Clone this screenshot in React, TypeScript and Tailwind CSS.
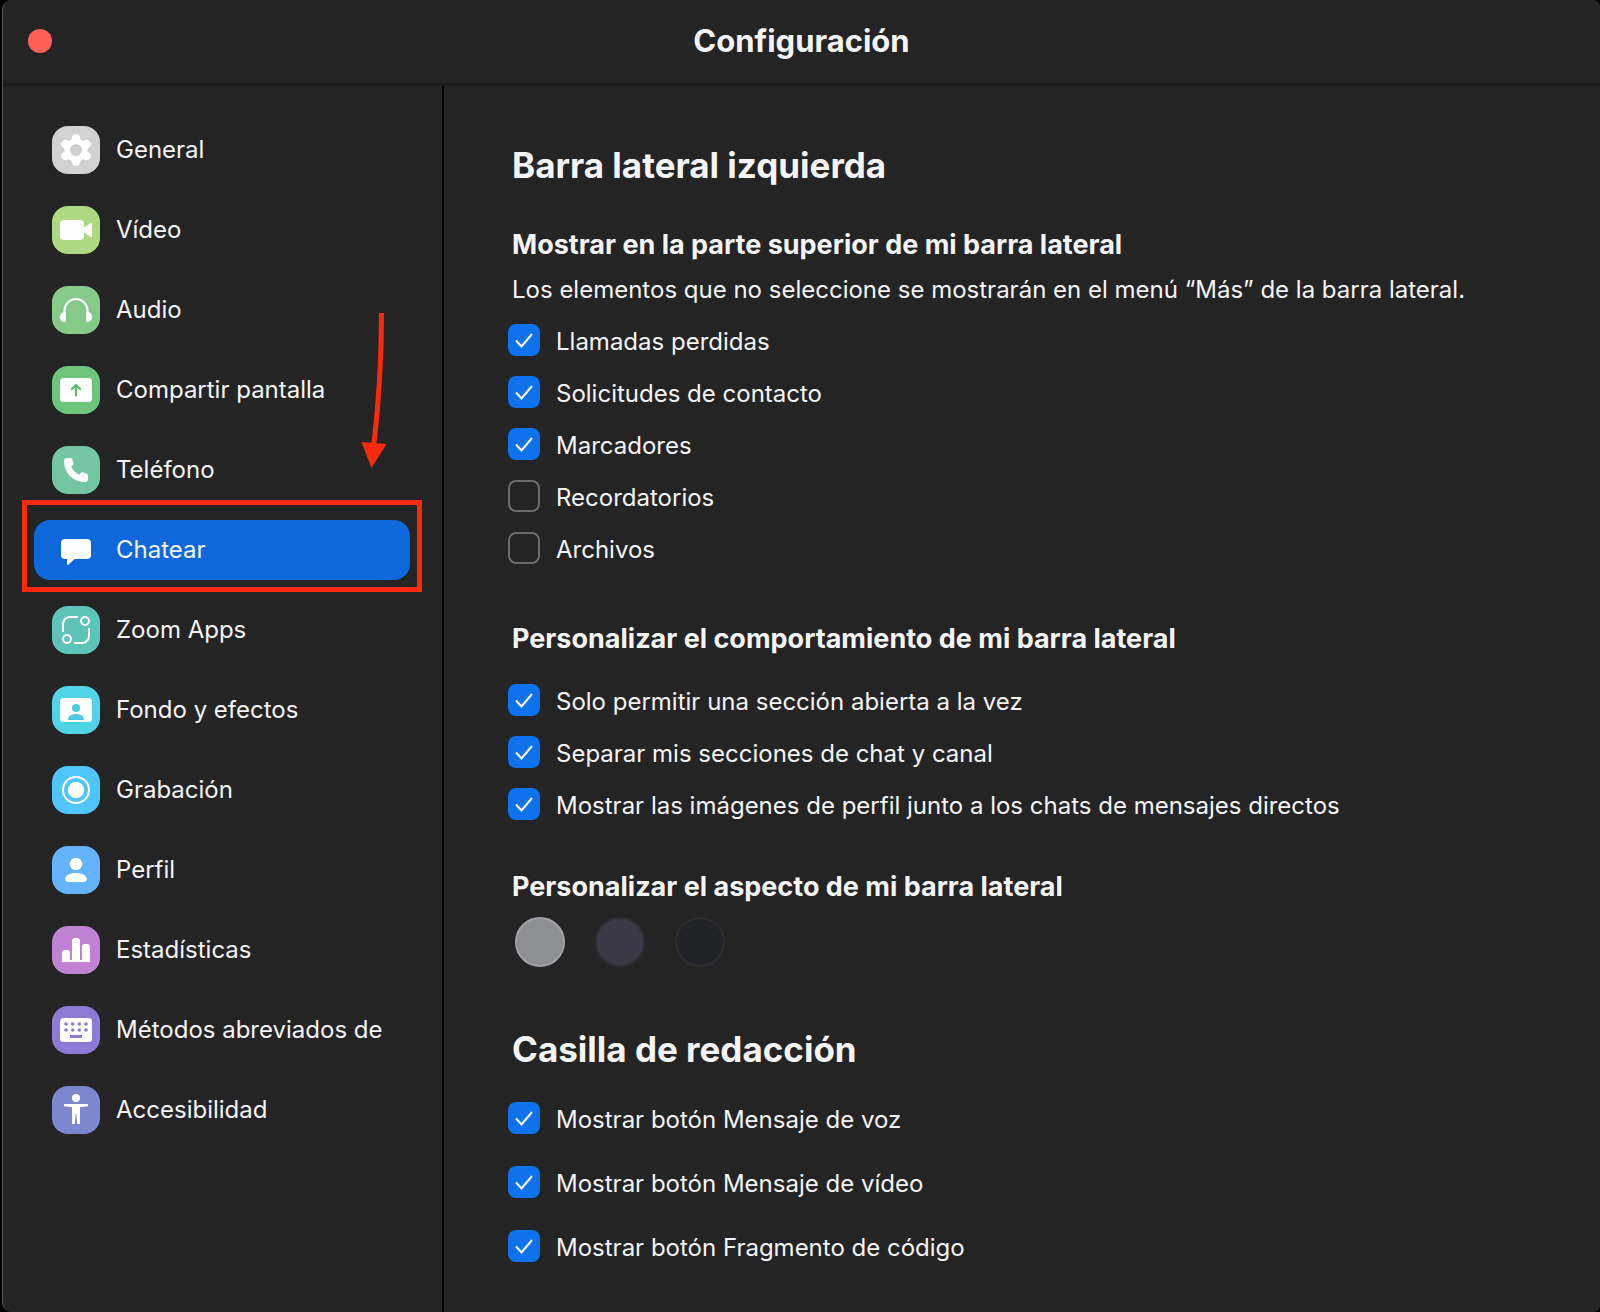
import { useState, type ReactNode } from "react";

const Svg = ({ children }: { children: ReactNode }) => (
  <svg viewBox="0 0 48 48" className="size-12" fill="#fff" aria-hidden="true">
    {children}
  </svg>
);

const nav = [
  {
    label: "General",
    tile: "bg-[#d2d2d2]",
    icon: (
      <Svg>
        <g stroke="#fff" strokeWidth="8.400" strokeLinecap="round">
          <path d="M24 12.200v23.600M13.300 18l21.400 12M34.700 18L13.300 30" />
        </g>
        <circle cx="24" cy="24" r="11.500" />
        <circle cx="24" cy="24" r="6" fill="#cfcfcf" />
      </Svg>
    ),
  },
  {
    label: "Vídeo",
    tile: "bg-[#aed982]",
    icon: (
      <Svg>
        <rect x="8" y="14" width="24" height="20" rx="4" />
        <path d="M31.500 22l7.300-4.900c.6-.4 1.200-.1 1.200.6v12.600c0 .7-.6 1-1.200.6L31.500 26z" />
      </Svg>
    ),
  },
  {
    label: "Audio",
    tile: "bg-[#86ca8a]",
    icon: (
      <Svg>
        <path d="M12.500 28v-3.500a11.500 11.500 0 0 1 23 0V28" fill="none" stroke="#fff" strokeWidth="2" />
        <path d="M11.500 26H14v8.500a1.500 1.500 0 0 1-1.500 1.500C9.500 36 8 33.500 8 31s1.200-4.400 3.500-5zM36.500 26H34v8.500a1.500 1.500 0 0 0 1.500 1.500c3 0 4.500-2.500 4.500-5s-1.200-4.400-3.500-5z" />
      </Svg>
    ),
  },
  {
    label: "Compartir pantalla",
    tile: "bg-[#6cc57a]",
    icon: (
      <Svg>
        <rect x="8" y="12" width="32" height="24" rx="3.500" />
        <path d="M24 29.500V19.500M19.800 23.200l4.200-4.200 4.200 4.200" fill="none" stroke="#5cbd6c" strokeWidth="2.300" strokeLinecap="round" strokeLinejoin="round" />
      </Svg>
    ),
  },
  {
    label: "Teléfono",
    tile: "bg-[#74c5a2]",
    icon: (
      <Svg>
        <path d="M15 12h3.200c1.100 0 2 .7 2.300 1.700l1 3.500c.3 1-.1 2-1 2.600l-1.300.9c1.500 3.400 4.500 6.500 8 8l.9-1.300c.6-.9 1.700-1.300 2.700-1l3.500 1c1 .3 1.700 1.200 1.700 2.300V33c0 1.700-1.300 3-3 3C21 36 12 27 12 15c0-1.700 1.300-3 3-3z" />
      </Svg>
    ),
  },
  {
    label: "Chatear",
    tile: "",
    icon: (
      <Svg>
        <path d="M13 13h22a4 4 0 0 1 4 4v12a4 4 0 0 1-4 4H22.500l-6 5.800c-.7.600-1.500.200-1.500-.8v-5h-2a4 4 0 0 1-4-4V17a4 4 0 0 1 4-4z" />
      </Svg>
    ),
  },
  {
    label: "Zoom Apps",
    tile: "bg-[#5ec4b9]",
    icon: (
      <Svg>
        <g fill="none" stroke="#fff" strokeWidth="2">
          <path d="M26 11h-8a7 7 0 0 0-7 7v8M22 37h8a7 7 0 0 0 7-7v-8" />
          <circle cx="33" cy="15" r="4" />
          <circle cx="15" cy="33" r="4" />
        </g>
      </Svg>
    ),
  },
  {
    label: "Fondo y efectos",
    tile: "bg-[#4fd3e5]",
    icon: (
      <Svg>
        <rect x="8" y="12" width="32" height="24" rx="3.500" />
        <circle cx="24" cy="22" r="4" fill="#4acbdf" />
        <path d="M16 34c0-4 3.600-6 8-6s8 2 8 6z" fill="#4acbdf" />
      </Svg>
    ),
  },
  {
    label: "Grabación",
    tile: "bg-[#4fc5fb]",
    icon: (
      <Svg>
        <circle cx="24" cy="24" r="13" fill="none" stroke="#fff" strokeWidth="2" />
        <circle cx="24" cy="24" r="8.200" />
      </Svg>
    ),
  },
  {
    label: "Perfil",
    tile: "bg-[#65b4fb]",
    icon: (
      <Svg>
        <circle cx="24" cy="18" r="6.200" />
        <path d="M24 27c6 0 10.800 2.600 10.800 6 0 2-1.300 3-3.300 3h-15c-2 0-3.300-1-3.300-3 0-3.400 4.800-6 10.800-6z" />
      </Svg>
    ),
  },
  {
    label: "Estadísticas",
    tile: "bg-[#c282d3]",
    icon: (
      <Svg>
        <path d="M10 36V27a3 3 0 0 1 3-3h2a3 3 0 0 1 3 3v7h2V15a3 3 0 0 1 3-3h2a3 3 0 0 1 3 3v19h2V21a3 3 0 0 1 3-3h2a3 3 0 0 1 3 3v15z" />
      </Svg>
    ),
  },
  {
    label: "Métodos abreviados de",
    tile: "bg-[#8c7ad6]",
    icon: (
      <Svg>
        <rect x="8" y="12" width="32" height="24" rx="3.500" />
        <g stroke="#8c7ad6" strokeWidth="3.600" fill="none">
          <path d="M14 18h20.500M14 24h20.500" strokeLinecap="round" strokeDasharray="0.010 6.660" />
          <path d="M18 30.500h12" strokeWidth="3" />
        </g>
      </Svg>
    ),
  },
  {
    label: "Accesibilidad",
    tile: "bg-[#7c87cf]",
    icon: (
      <Svg>
        <circle cx="24" cy="12" r="4" />
        <path d="M12 18h24v2.200l-8 1V38h-2.800l-.9-10h-.6l-.9 10H20V21.200l-8-1z" />
      </Svg>
    ),
  },
];

const topItems = [
  { label: "Llamadas perdidas", checked: true },
  { label: "Solicitudes de contacto", checked: true },
  { label: "Marcadores", checked: true },
  { label: "Recordatorios", checked: false },
  { label: "Archivos", checked: false },
];

const behaviorItems = [
  { label: "Solo permitir una sección abierta a la vez", checked: true },
  { label: "Separar mis secciones de chat y canal", checked: true },
  { label: "Mostrar las imágenes de perfil junto a los chats de mensajes directos", checked: true },
];

const composeItems = [
  { label: "Mostrar botón Mensaje de voz", checked: true },
  { label: "Mostrar botón Mensaje de vídeo", checked: true },
  { label: "Mostrar botón Fragmento de código", checked: true },
];

const themes = [
  { name: "Claro", color: "bg-[#8e8f91] border-[#a2a1a9]" },
  { name: "Medio", color: "bg-[#3b3945] border-[#302f36]" },
  { name: "Oscuro", color: "bg-[#222329] border-[#2e2e31]" },
];

function Option({ label, checked }: { label: string; checked: boolean }) {
  return (
    <label className="flex items-center gap-4 text-2xl leading-8">
      <span className="grid shrink-0">
        <input
          type="checkbox"
          defaultChecked={checked}
          className="peer col-start-1 row-start-1 size-8 appearance-none rounded-lg border-2 border-[#6b6b6b] checked:border-[#0e72ed] checked:bg-[#0e72ed]"
        />
        <svg
          viewBox="0 0 32 32"
          className="pointer-events-none invisible col-start-1 row-start-1 size-8 peer-checked:visible"
          fill="none"
          stroke="#fff"
          strokeWidth="2"
          aria-hidden="true"
        >
          <path d="M8 16.500l5.500 6L24 10" />
        </svg>
      </span>
      <span className="pt-1">{label}</span>
    </label>
  );
}

export default function App() {
  const [active, setActive] = useState("Chatear");

  return (
    <div className="min-h-screen overflow-hidden bg-black pl-[2px] font-[Inter,sans-serif] text-[#f5f5f7]">
      <div className="flex min-h-screen flex-col rounded-l-[10px] rounded-r-[6px] border-l border-[#565656] bg-[#242424]">
        <header className="grid h-[86px] grid-cols-[1fr_auto_1fr] items-center border-b-3 border-[#1b1b1b] px-[25px] pb-[2px]">
          <button type="button" aria-label="Cerrar" className="size-6 rounded-full bg-[#ff5f57]" />
          <h1 className="text-[31px] leading-10 font-bold">Configuración</h1>
        </header>

        <div className="flex flex-1">
          <aside className="w-[441px] shrink-0 border-r-2 border-black pt-[34px] pr-8 pl-[31px]">
            <nav className="flex flex-col gap-5">
              {nav.map((item) => (
                <div key={item.label} className="relative">
                  <button
                    type="button"
                    onClick={() => setActive(item.label)}
                    className={`flex h-[60px] w-full items-center gap-4 rounded-2xl px-[18px] text-left text-2xl whitespace-nowrap ${
                      active === item.label ? "bg-[#0e68db]" : ""
                    }`}
                  >
                    <span className={`size-12 shrink-0 rounded-2xl ${item.tile}`}>{item.icon}</span>
                    {item.label}
                  </button>
                  {item.label === "Chatear" ? (
                    <>
                      <div className="pointer-events-none absolute -inset-x-3 -top-5 -bottom-3 border-[5px] border-[#f92a0b]" />
                      <svg
                        viewBox="0 0 30 156"
                        className="pointer-events-none absolute right-5 bottom-28 h-[156px] w-[30px]"
                        aria-hidden="true"
                      >
                        <path d="M21.500 1Q21.500 66 14 132" fill="none" stroke="#f92a0b" strokeWidth="5" />
                        <path d="M1.500 130l25 2-15 24z" fill="#f92a0b" />
                      </svg>
                    </>
                  ) : null}
                </div>
              ))}
            </nav>
          </aside>

          <main className="flex-1 px-16 pt-14">
            <section className="pb-[59px]">
              <h2 className="pl-1 text-[35px] leading-[46px] font-bold">Barra lateral izquierda</h2>

              <h3 className="mt-[35px] pl-1 text-[27px] leading-11 font-bold">
                Mostrar en la parte superior de mi barra lateral
              </h3>
              <p className="mb-[9px] pl-1 text-2xl leading-[46px]">
                Los elementos que no seleccione se mostrarán en el menú “Más” de la barra lateral.
              </p>
              <div className="flex flex-col gap-4">
                {topItems.map((item) => (
                  <Option key={item.label} {...item} />
                ))}
              </div>

              <h3 className="mt-[51px] mb-[21px] pl-1 text-[27px] leading-11 font-bold">
                Personalizar el comportamiento de mi barra lateral
              </h3>
              <div className="flex flex-col gap-4">
                {behaviorItems.map((item) => (
                  <Option key={item.label} {...item} />
                ))}
              </div>

              <h3 className="mt-[43px] pl-1 text-[27px] leading-11 font-bold">
                Personalizar el aspecto de mi barra lateral
              </h3>
              <div className="mt-2 flex gap-[30px] px-[7px]">
                {themes.map((theme) => (
                  <button
                    key={theme.name}
                    type="button"
                    aria-label={theme.name}
                    className={`size-[50px] rounded-full border-2 ${theme.color}`}
                  />
                ))}
              </div>
            </section>

            <section>
              <h2 className="pl-1 text-[35px] leading-[46px] font-bold">Casilla de redacción</h2>
              <div className="mt-7 flex flex-col gap-7">
                {composeItems.map((item) => (
                  <Option key={item.label} {...item} />
                ))}
              </div>
            </section>
          </main>
        </div>
      </div>
    </div>
  );
}
